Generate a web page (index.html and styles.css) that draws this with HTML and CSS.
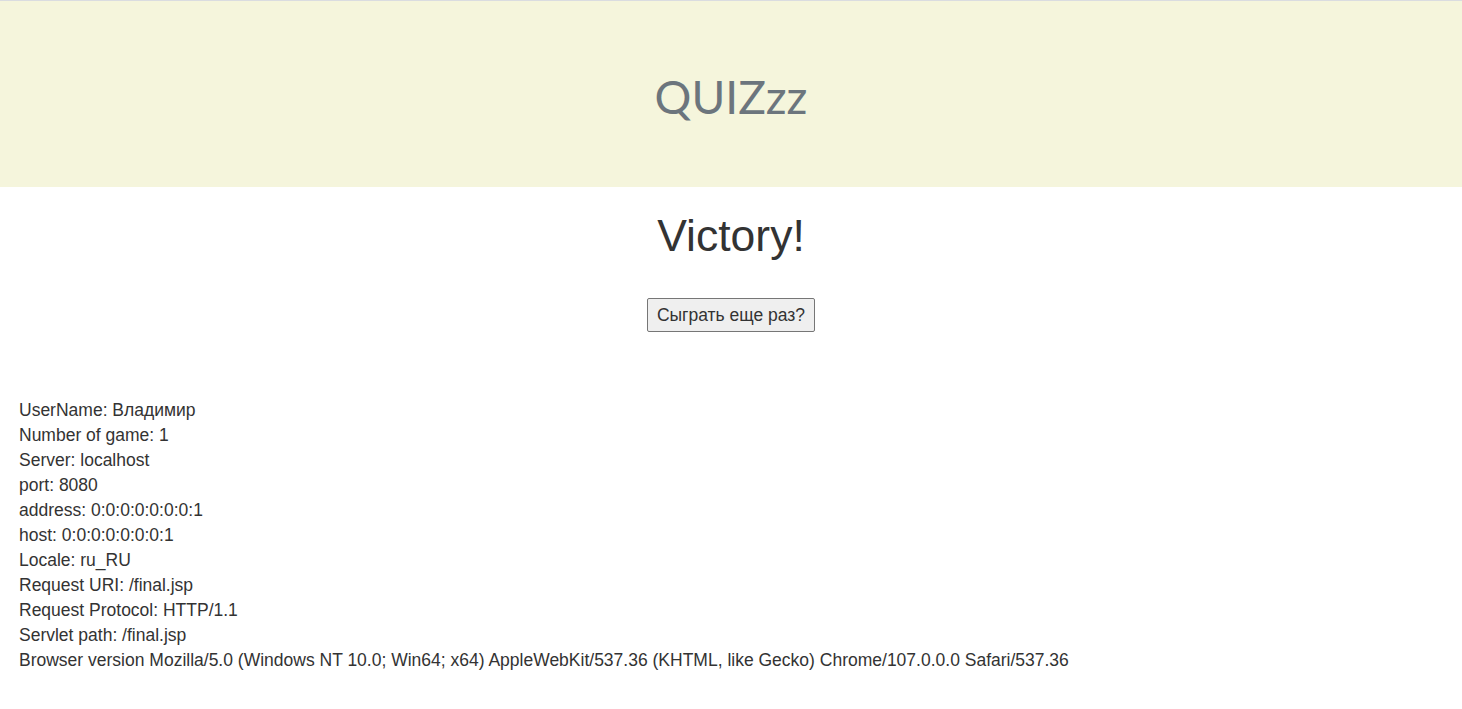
FILE: index.html
```html
<!DOCTYPE html>
<html lang="ru">
<head>
<meta charset="utf-8">
<title>QUIZzz</title>
<link rel="stylesheet" href="styles.css">
</head>
<body>
<header class="hero">
  <h1 class="hero-title">QUIZzz</h1>
</header>
<main class="content">
  <h2 class="result">Victory!</h2>
  <form class="again">
    <button type="button" class="again-btn">Сыграть еще раз?</button>
  </form>
  <div class="info">
    <div>UserName: Владимир</div>
    <div>Number of game: 1</div>
    <div>Server: localhost</div>
    <div>port: 8080</div>
    <div>address: 0:0:0:0:0:0:0:1</div>
    <div>host: 0:0:0:0:0:0:0:1</div>
    <div>Locale: ru_RU</div>
    <div>Request URI: /final.jsp</div>
    <div>Request Protocol: HTTP/1.1</div>
    <div>Servlet path: /final.jsp</div>
    <div>Browser version Mozilla/5.0 (Windows NT 10.0; Win64; x64) AppleWebKit/537.36 (KHTML, like Gecko) Chrome/107.0.0.0 Safari/537.36</div>
  </div>
</main>
</body>
</html>
```
FILE: styles.css
```css
html, body {
  margin: 0;
  padding: 0;
}
body {
  font-family: "Liberation Sans", Arial, sans-serif;
  font-size: 17.5px;
  line-height: 25px;
  color: #333333;
  background: #ffffff;
  border-top: 1px solid #dadce0;
}
.hero {
  background: #f5f5dc;
  height: 186px;
  display: flex;
  align-items: center;
  justify-content: center;
}
.hero-title {
  margin: 0;
  font-family: Lato, "Liberation Sans", sans-serif;
  font-weight: 400;
  font-size: 46px;
  line-height: 1.2;
  color: #6c757d;
  padding-top: 6px;
}
.content {
  display: flex;
  flex-direction: column;
}
.result {
  margin: 22px 0 0;
  text-align: center;
  font-weight: 400;
  font-size: 44.5px;
  line-height: 53px;
  color: #333333;
}
.again {
  display: flex;
  justify-content: center;
  margin-top: 36px;
}
.again-btn {
  font-family: "Liberation Sans", Arial, sans-serif;
  font-size: 17.5px;
  line-height: 20px;
  color: #333333;
  background: #efefef;
  border: 1px solid #767676;
  border-radius: 2px;
  padding: 6px 9px;
  height: 34px;
}
.info {
  margin-top: 66px;
  padding-left: 19px;
}
```
